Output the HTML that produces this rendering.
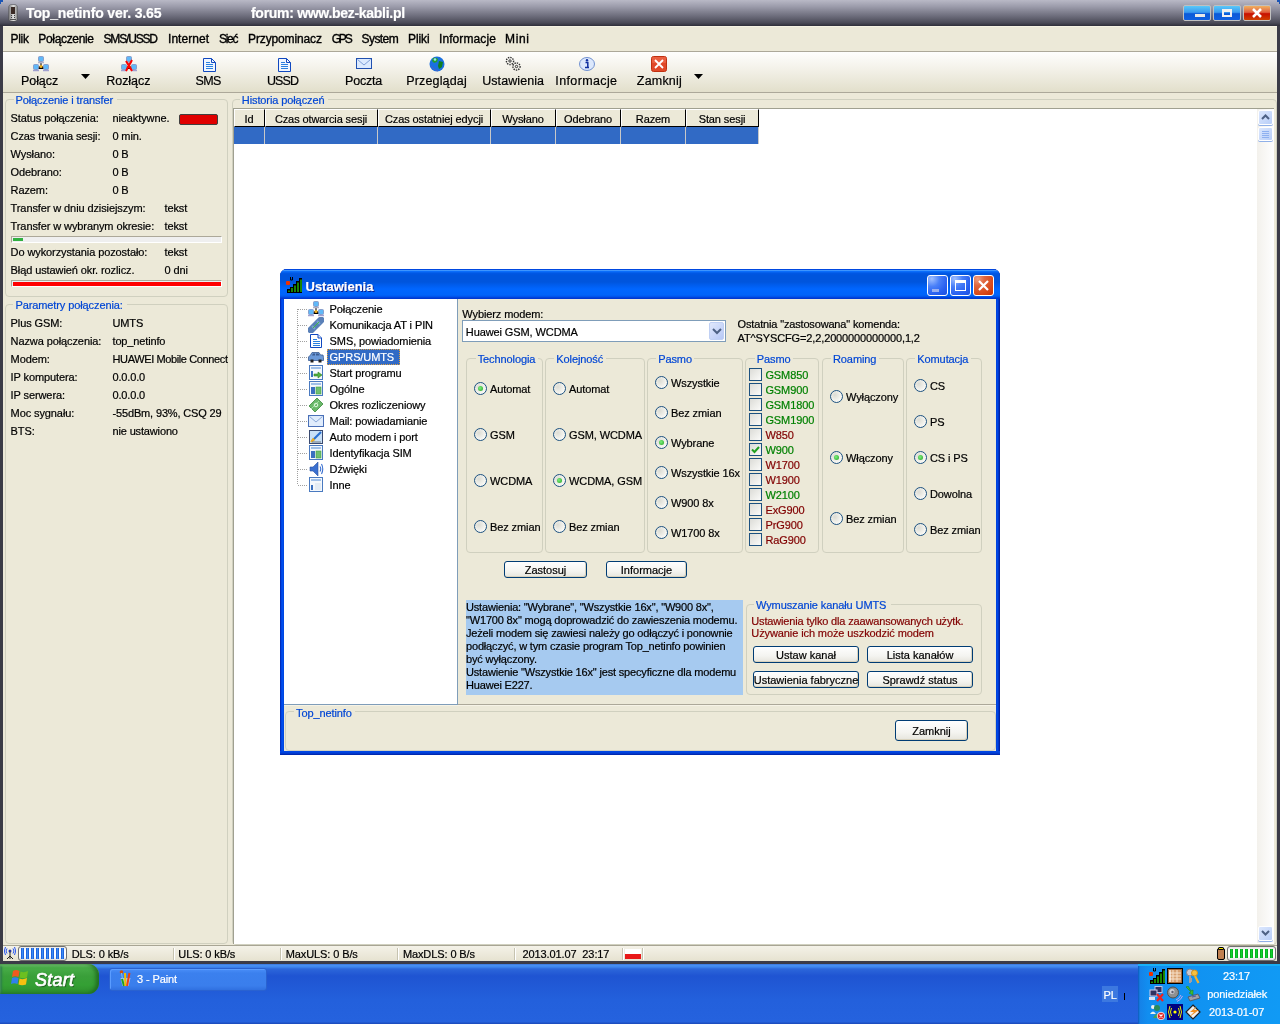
<!DOCTYPE html><html><head><meta charset="utf-8"><style>
html,body{margin:0;padding:0;width:1280px;height:1024px;overflow:hidden;background:#fff;}
body{position:relative;font-family:"Liberation Sans",sans-serif;font-size:11px;}
#root{position:absolute;left:0;top:0;width:1280px;height:1024px;will-change:transform;}
.t{-webkit-text-stroke:0.2px currentColor;}
.t{position:absolute;white-space:pre;}
div{box-sizing:border-box;}
</style></head><body><div id="root">
<div style="position:absolute;left:0px;top:0px;width:1280px;height:964px;background:#3b3b47;"></div>
<div style="position:absolute;left:0px;top:0px;width:1280px;height:26px;background:linear-gradient(#b9b9c6 0%,#9c9cab 25%,#6f6f7e 60%,#4a4a57 88%,#2e2e39 100%);"></div>
<div style="position:absolute;left:0px;top:0px;width:3px;height:2px;background:#1b55b5;"></div>
<div style="position:absolute;left:0px;top:0px;width:1px;height:4px;background:#1b55b5;"></div>
<div style="position:absolute;left:1277px;top:0px;width:3px;height:2px;background:#1b55b5;"></div>
<div style="position:absolute;left:1279px;top:0px;width:1px;height:4px;background:#1b55b5;"></div>
<div class="t " style="left:26px;top:4.65px;font-size:14px;line-height:17px;color:#fff;font-weight:bold;letter-spacing:-0.134px;">Top_netinfo ver. 3.65</div>
<div class="t " style="left:251px;top:4.65px;font-size:14px;line-height:17px;color:#fff;font-weight:bold;letter-spacing:-0.293px;">forum: www.bez-kabli.pl</div>
<div style="position:absolute;left:9px;top:5px;width:8px;height:16px;background:linear-gradient(90deg,#7a7a7a,#c8c8c8 40%,#e0e0e0 60%,#8a8a8a);border-radius:2px;box-shadow:0 0 0 0.5px #505050;"></div>
<div style="position:absolute;left:11px;top:7px;width:4px;height:7px;background:#3a2a25;"></div>
<div style="position:absolute;left:11px;top:15px;width:1px;height:1px;background:#404040;"></div>
<div style="position:absolute;left:14px;top:15px;width:1px;height:1px;background:#404040;"></div>
<div style="position:absolute;left:11px;top:17px;width:1px;height:1px;background:#404040;"></div>
<div style="position:absolute;left:14px;top:17px;width:1px;height:1px;background:#404040;"></div>
<div style="position:absolute;left:10px;top:19px;width:6px;height:1px;background:#505050;"></div>
<div style="position:absolute;left:1183px;top:5px;width:28px;height:16px;background:linear-gradient(#5ac8f8 0%,#3a9af0 45%,#0a5ad8 55%,#1060e0 100%);border:1px solid #c0c0c0;border-radius:2px;"></div>
<div style="position:absolute;left:1213px;top:5px;width:28px;height:16px;background:linear-gradient(#5ac8f8 0%,#3a9af0 45%,#0a5ad8 55%,#1060e0 100%);border:1px solid #c0c0c0;border-radius:2px;"></div>
<div style="position:absolute;left:1243px;top:5px;width:28px;height:16px;background:linear-gradient(#f0b060 0%,#e06040 45%,#c81000 55%,#d04000 100%);border:1px solid #c0c0c0;border-radius:2px;"></div>
<div style="position:absolute;left:1195px;top:14px;width:10px;height:3px;background:#e8e8e8;"></div>
<div style="position:absolute;left:1222px;top:9px;width:10px;height:8px;border:2px solid #f0f0f0;border-top-width:3px;"></div>
<svg style="position:absolute;left:1252px;top:8px" width="10" height="10"><path d="M1 1L9 9M9 1L1 9" stroke="#fff" stroke-width="2.5"/></svg>
<div style="position:absolute;left:3px;top:26px;width:1274px;height:935px;background:#ece9d8;"></div>
<div style="position:absolute;left:3px;top:26px;width:1274px;height:1px;background:#f6f3e3;"></div>
<div style="position:absolute;left:3px;top:51px;width:1274px;height:1px;background:#aca899;"></div>
<div class="t " style="left:10.5px;top:31.84px;font-size:12px;line-height:14px;color:#000;font-weight:normal;letter-spacing:-0.281px;-webkit-text-stroke:0.35px #000;">Plik</div>
<div class="t " style="left:38.3px;top:31.84px;font-size:12px;line-height:14px;color:#000;font-weight:normal;letter-spacing:-0.334px;-webkit-text-stroke:0.35px #000;">Połączenie</div>
<div class="t " style="left:103.5px;top:31.84px;font-size:12px;line-height:14px;color:#000;font-weight:normal;letter-spacing:-1.167px;-webkit-text-stroke:0.35px #000;">SMS/USSD</div>
<div class="t " style="left:168px;top:31.84px;font-size:12px;line-height:14px;color:#000;font-weight:normal;letter-spacing:0.047px;-webkit-text-stroke:0.35px #000;">Internet</div>
<div class="t " style="left:219px;top:31.84px;font-size:12px;line-height:14px;color:#000;font-weight:normal;letter-spacing:-1.281px;-webkit-text-stroke:0.35px #000;">Sieć</div>
<div class="t " style="left:248px;top:31.84px;font-size:12px;line-height:14px;color:#000;font-weight:normal;letter-spacing:-0.124px;-webkit-text-stroke:0.35px #000;">Przypominacz</div>
<div class="t " style="left:331.7px;top:31.84px;font-size:12px;line-height:14px;color:#000;font-weight:normal;letter-spacing:-2.164px;-webkit-text-stroke:0.35px #000;">GPS</div>
<div class="t " style="left:361.5px;top:31.84px;font-size:12px;line-height:14px;color:#000;font-weight:normal;letter-spacing:-0.560px;-webkit-text-stroke:0.35px #000;">System</div>
<div class="t " style="left:408px;top:31.84px;font-size:12px;line-height:14px;color:#000;font-weight:normal;letter-spacing:-0.079px;-webkit-text-stroke:0.35px #000;">Pliki</div>
<div class="t " style="left:439px;top:31.84px;font-size:12px;line-height:14px;color:#000;font-weight:normal;letter-spacing:0.087px;-webkit-text-stroke:0.35px #000;">Informacje</div>
<div class="t " style="left:505px;top:31.84px;font-size:12px;line-height:14px;color:#000;font-weight:normal;letter-spacing:0.661px;-webkit-text-stroke:0.35px #000;">Mini</div>
<div style="position:absolute;left:3px;top:52px;width:1274px;height:40px;background:linear-gradient(#fefefd 0%,#f4f2ea 40%,#e2dfcb 100%);"></div>
<div style="position:absolute;left:3px;top:92px;width:1274px;height:1px;background:#aca899;"></div>
<div class="t " style="left:21px;top:74.17px;font-size:12.5px;line-height:15px;color:#000;font-weight:normal;letter-spacing:-0.066px;">Połącz</div>
<div class="t " style="left:106.3px;top:74.17px;font-size:12.5px;line-height:15px;color:#000;font-weight:normal;letter-spacing:-0.061px;">Rozłącz</div>
<div class="t " style="left:195.4px;top:74.17px;font-size:12.5px;line-height:15px;color:#000;font-weight:normal;letter-spacing:-0.597px;">SMS</div>
<div class="t " style="left:267px;top:74.17px;font-size:12.5px;line-height:15px;color:#000;font-weight:normal;letter-spacing:-0.917px;">USSD</div>
<div class="t " style="left:345px;top:74.17px;font-size:12.5px;line-height:15px;color:#000;font-weight:normal;letter-spacing:-0.184px;">Poczta</div>
<div class="t " style="left:406.2px;top:74.17px;font-size:12.5px;line-height:15px;color:#000;font-weight:normal;letter-spacing:0.158px;">Przeglądaj</div>
<div class="t " style="left:482.2px;top:74.17px;font-size:12.5px;line-height:15px;color:#000;font-weight:normal;letter-spacing:0.072px;">Ustawienia</div>
<div class="t " style="left:555.3px;top:74.17px;font-size:12.5px;line-height:15px;color:#000;font-weight:normal;letter-spacing:0.373px;">Informacje</div>
<div class="t " style="left:636.8px;top:74.17px;font-size:12.5px;line-height:15px;color:#000;font-weight:normal;letter-spacing:0.206px;">Zamknij</div>
<svg style="position:absolute;left:81px;top:74px" width="9" height="5"><path d="M0 0H9L4.5 5Z" fill="#000"/></svg>
<svg style="position:absolute;left:694px;top:74px" width="9" height="5"><path d="M0 0H9L4.5 5Z" fill="#000"/></svg>
<svg style="position:absolute;left:33px;top:56px" width="16" height="16" viewBox="0 0 16 16"><path d="M8 5V10M3 13L8 10L13 13" stroke="#202020" stroke-width="1.2"/><rect x="5.5" y="0.5" width="5" height="5" rx="1" fill="#60b8f8" stroke="#8090c0" stroke-width=".8"/><path d="M5 6.5H11" stroke="#b0b0c8" stroke-width="1.5"/><rect x="0.5" y="8.5" width="5" height="5" rx="1" fill="#60b8f8" stroke="#8090c0" stroke-width=".8"/><path d="M0 14.5H6" stroke="#a0a0d0" stroke-width="1.5"/><rect x="10.5" y="8.5" width="5" height="5" rx="1" fill="#60b8f8" stroke="#8090c0" stroke-width=".8"/><path d="M10 14.5H16" stroke="#a0a0d0" stroke-width="1.5"/><circle cx="8" cy="10.5" r="1.5" fill="#f0b020"/></svg>
<svg style="position:absolute;left:121px;top:56px" width="16" height="16" viewBox="0 0 16 16"><path d="M8 5V10M3 13L8 10L13 13" stroke="#202020" stroke-width="1.2"/><rect x="5.5" y="0.5" width="5" height="5" rx="1" fill="#60b8f8" stroke="#8090c0" stroke-width=".8"/><path d="M5 6.5H11" stroke="#b0b0c8" stroke-width="1.5"/><rect x="0.5" y="8.5" width="5" height="5" rx="1" fill="#60b8f8" stroke="#8090c0" stroke-width=".8"/><path d="M0 14.5H6" stroke="#a0a0d0" stroke-width="1.5"/><rect x="10.5" y="8.5" width="5" height="5" rx="1" fill="#60b8f8" stroke="#8090c0" stroke-width=".8"/><path d="M10 14.5H16" stroke="#a0a0d0" stroke-width="1.5"/><circle cx="8" cy="10.5" r="1.5" fill="#f0b020"/><path d="M5 5L11 15M11 4L5 15" stroke="#ff0000" stroke-width="2"/></svg>
<svg style="position:absolute;left:203px;top:58px" width="13" height="14" viewBox="0 0 13 14"><path d="M0.5 0.5H8.5L12.5 4.5V13.5H0.5Z" fill="#f0f6ff" stroke="#1048c0" stroke-width="1"/><path d="M8.5 0.5V4.5H12.5" fill="none" stroke="#1048c0"/><path d="M3 4.5H7M3 6.5H10M3 8.5H10M3 10.5H10" stroke="#2a80e0" stroke-width="1"/></svg>
<svg style="position:absolute;left:278px;top:58px" width="13" height="14" viewBox="0 0 13 14"><path d="M0.5 0.5H8.5L12.5 4.5V13.5H0.5Z" fill="#f0f6ff" stroke="#1048c0" stroke-width="1"/><path d="M8.5 0.5V4.5H12.5" fill="none" stroke="#1048c0"/><path d="M3 4.5H7M3 6.5H10M3 8.5H10M3 10.5H10" stroke="#2a80e0" stroke-width="1"/></svg>
<svg style="position:absolute;left:356px;top:58px" width="16" height="11" viewBox="0 0 16 11"><rect x="0.5" y="0.5" width="15" height="10" fill="#dceafe" stroke="#2050b0"/><path d="M1.5 1.5L8 7L14.5 1.5" stroke="#80a0d8" fill="none"/></svg>
<svg style="position:absolute;left:429px;top:56px" width="16" height="16" viewBox="0 0 16 16"><circle cx="8" cy="8" r="7.5" fill="#1a70e0"/><path d="M4 2Q7 1 9 3L8 6L5 7L3 5Z" fill="#20a030"/><path d="M10 5L14 6L13 11L10 13L9 10Z" fill="#108020"/><circle cx="6" cy="3.5" r="1.3" fill="#a0e0f0"/><path d="M2 10Q5 14 9 15" stroke="#5060c0" fill="none"/></svg>
<svg style="position:absolute;left:505px;top:56px" width="17" height="16" viewBox="0 0 17 16"><circle cx="5" cy="5" r="3.6" fill="none" stroke="#303030" stroke-width="1.4" stroke-dasharray="1.4 1"/><circle cx="5" cy="5" r="1.2" fill="none" stroke="#303030"/><circle cx="11.5" cy="10.5" r="3.6" fill="none" stroke="#303030" stroke-width="1.4" stroke-dasharray="1.4 1"/><circle cx="11.5" cy="10.5" r="1.2" fill="none" stroke="#303030"/></svg>
<svg style="position:absolute;left:579px;top:57px" width="16" height="14" viewBox="0 0 16 14"><ellipse cx="8" cy="7" rx="7.5" ry="6.5" fill="#dce8fc" stroke="#7090d0"/><circle cx="8" cy="3.3" r="1.2" fill="#1030a0"/><path d="M6.5 5.5H8.8V10.5H10M6 10.5H8.8" stroke="#1030a0" stroke-width="1.5" fill="none"/></svg>
<svg style="position:absolute;left:651px;top:56px" width="16" height="16" viewBox="0 0 16 16"><rect x="0.5" y="0.5" width="15" height="15" rx="2" fill="#e04828" stroke="#c03010"/><rect x="1" y="1" width="14" height="6" rx="1" fill="#f07050" opacity=".6"/><path d="M4 4L12 12M12 4L4 12" stroke="#fff" stroke-width="1.8"/></svg>
<div style="position:absolute;left:5px;top:99px;width:223px;height:198px;border:1px solid #d0d0bf;border-radius:4px;"></div>
<div class="t" style="left:13.5px;top:93px;height:13px;padding:0 2px;background:#ece9d8;font-size:11px;line-height:13px;color:transparent">Połączenie i transfer</div>
<div class="t " style="left:15.5px;top:93.69px;font-size:11px;line-height:13px;color:#0046d5;font-weight:normal;letter-spacing:-0.100px;">Połączenie i transfer</div>
<div class="t " style="left:10.6px;top:111.69px;font-size:11px;line-height:13px;color:#000;font-weight:normal;letter-spacing:-0.100px;">Status połączenia:</div>
<div class="t " style="left:112.4px;top:111.69px;font-size:11px;line-height:13px;color:#000;font-weight:normal;letter-spacing:-0.100px;">nieaktywne.</div>
<div class="t " style="left:10.6px;top:129.69px;font-size:11px;line-height:13px;color:#000;font-weight:normal;letter-spacing:-0.100px;">Czas trwania sesji:</div>
<div class="t " style="left:112.4px;top:129.69px;font-size:11px;line-height:13px;color:#000;font-weight:normal;letter-spacing:-0.100px;">0 min.</div>
<div class="t " style="left:10.6px;top:147.69px;font-size:11px;line-height:13px;color:#000;font-weight:normal;letter-spacing:-0.100px;">Wysłano:</div>
<div class="t " style="left:112.4px;top:147.69px;font-size:11px;line-height:13px;color:#000;font-weight:normal;letter-spacing:-0.100px;">0 B</div>
<div class="t " style="left:10.6px;top:165.69px;font-size:11px;line-height:13px;color:#000;font-weight:normal;letter-spacing:-0.100px;">Odebrano:</div>
<div class="t " style="left:112.4px;top:165.69px;font-size:11px;line-height:13px;color:#000;font-weight:normal;letter-spacing:-0.100px;">0 B</div>
<div class="t " style="left:10.6px;top:183.69px;font-size:11px;line-height:13px;color:#000;font-weight:normal;letter-spacing:-0.100px;">Razem:</div>
<div class="t " style="left:112.4px;top:183.69px;font-size:11px;line-height:13px;color:#000;font-weight:normal;letter-spacing:-0.100px;">0 B</div>
<div class="t " style="left:10.6px;top:201.69px;font-size:11px;line-height:13px;color:#000;font-weight:normal;letter-spacing:-0.100px;">Transfer w dniu dzisiejszym:</div>
<div class="t " style="left:164.5px;top:201.69px;font-size:11px;line-height:13px;color:#000;font-weight:normal;letter-spacing:-0.100px;">tekst</div>
<div class="t " style="left:10.6px;top:219.69px;font-size:11px;line-height:13px;color:#000;font-weight:normal;letter-spacing:-0.100px;">Transfer w wybranym okresie:</div>
<div class="t " style="left:164.5px;top:219.69px;font-size:11px;line-height:13px;color:#000;font-weight:normal;letter-spacing:-0.100px;">tekst</div>
<div class="t " style="left:10.6px;top:245.69px;font-size:11px;line-height:13px;color:#000;font-weight:normal;letter-spacing:-0.100px;">Do wykorzystania pozostało:</div>
<div class="t " style="left:164.5px;top:245.69px;font-size:11px;line-height:13px;color:#000;font-weight:normal;letter-spacing:-0.100px;">tekst</div>
<div class="t " style="left:10.6px;top:263.69px;font-size:11px;line-height:13px;color:#000;font-weight:normal;letter-spacing:-0.100px;">Błąd ustawień okr. rozlicz.</div>
<div class="t " style="left:164.5px;top:263.69px;font-size:11px;line-height:13px;color:#000;font-weight:normal;letter-spacing:-0.100px;">0 dni</div>
<div style="position:absolute;left:179px;top:114px;width:39px;height:11px;background:#e00000;border:1px solid #404040;border-radius:2px;"></div>
<div style="position:absolute;left:11px;top:236px;width:211px;height:7px;background:#efefef;border-top:1px solid #aca899;border-left:1px solid #aca899;border-bottom:1px solid #fff;border-right:1px solid #fff;"></div>
<div style="position:absolute;left:13px;top:238px;width:10px;height:3px;background:#30b040;"></div>
<div style="position:absolute;left:11px;top:280px;width:211px;height:7px;background:#ff0000;border-top:1px solid #aca899;border-left:1px solid #aca899;border-bottom:1px solid #fff;border-right:1px solid #fff;box-shadow:inset 1px 1px 0 #e8f0f0;"></div>
<div style="position:absolute;left:5px;top:304px;width:223px;height:640px;border:1px solid #d0d0bf;border-radius:4px;"></div>
<div class="t" style="left:13.4px;top:298px;height:13px;padding:0 2px;background:#ece9d8;font-size:11px;line-height:13px;color:transparent">Parametry połączenia:</div>
<div class="t " style="left:15.4px;top:298.69px;font-size:11px;line-height:13px;color:#0046d5;font-weight:normal;letter-spacing:-0.100px;">Parametry połączenia:</div>
<div class="t " style="left:10.6px;top:316.69px;font-size:11px;line-height:13px;color:#000;font-weight:normal;letter-spacing:-0.100px;">Plus GSM:</div>
<div style="position:absolute;left:112px;top:314px;width:116px;height:16px;overflow:hidden">
<div class="t " style="left:0.5px;top:2.69px;font-size:11px;line-height:13px;color:#000;font-weight:normal;letter-spacing:-0.150px;">UMTS</div>
</div>
<div class="t " style="left:10.6px;top:334.69px;font-size:11px;line-height:13px;color:#000;font-weight:normal;letter-spacing:-0.100px;">Nazwa połączenia:</div>
<div style="position:absolute;left:112px;top:332px;width:116px;height:16px;overflow:hidden">
<div class="t " style="left:0.5px;top:2.69px;font-size:11px;line-height:13px;color:#000;font-weight:normal;letter-spacing:-0.150px;">top_netinfo</div>
</div>
<div class="t " style="left:10.6px;top:352.69px;font-size:11px;line-height:13px;color:#000;font-weight:normal;letter-spacing:-0.100px;">Modem:</div>
<div style="position:absolute;left:112px;top:350px;width:116px;height:16px;overflow:hidden">
<div class="t " style="left:0.5px;top:2.69px;font-size:11px;line-height:13px;color:#000;font-weight:normal;letter-spacing:-0.380px;">HUAWEI Mobile Connect</div>
</div>
<div class="t " style="left:10.6px;top:370.69px;font-size:11px;line-height:13px;color:#000;font-weight:normal;letter-spacing:-0.100px;">IP komputera:</div>
<div style="position:absolute;left:112px;top:368px;width:116px;height:16px;overflow:hidden">
<div class="t " style="left:0.5px;top:2.69px;font-size:11px;line-height:13px;color:#000;font-weight:normal;letter-spacing:-0.150px;">0.0.0.0</div>
</div>
<div class="t " style="left:10.6px;top:388.69px;font-size:11px;line-height:13px;color:#000;font-weight:normal;letter-spacing:-0.100px;">IP serwera:</div>
<div style="position:absolute;left:112px;top:386px;width:116px;height:16px;overflow:hidden">
<div class="t " style="left:0.5px;top:2.69px;font-size:11px;line-height:13px;color:#000;font-weight:normal;letter-spacing:-0.150px;">0.0.0.0</div>
</div>
<div class="t " style="left:10.6px;top:406.69px;font-size:11px;line-height:13px;color:#000;font-weight:normal;letter-spacing:-0.100px;">Moc sygnału:</div>
<div style="position:absolute;left:112px;top:404px;width:116px;height:16px;overflow:hidden">
<div class="t " style="left:0.5px;top:2.69px;font-size:11px;line-height:13px;color:#000;font-weight:normal;letter-spacing:-0.150px;">-55dBm, 93%, CSQ 29</div>
</div>
<div class="t " style="left:10.6px;top:424.69px;font-size:11px;line-height:13px;color:#000;font-weight:normal;letter-spacing:-0.100px;">BTS:</div>
<div style="position:absolute;left:112px;top:422px;width:116px;height:16px;overflow:hidden">
<div class="t " style="left:0.5px;top:2.69px;font-size:11px;line-height:13px;color:#000;font-weight:normal;letter-spacing:-0.150px;">nie ustawiono</div>
</div>
<div style="position:absolute;left:232px;top:99px;width:1045px;height:846px;border:1px solid #d0d0bf;border-radius:4px;"></div>
<div class="t" style="left:239.8px;top:93px;height:13px;padding:0 2px;background:#ece9d8;font-size:11px;line-height:13px;color:transparent">Historia połączeń</div>
<div class="t " style="left:241.8px;top:93.69px;font-size:11px;line-height:13px;color:#0046d5;font-weight:normal;letter-spacing:-0.100px;">Historia połączeń</div>
<div style="position:absolute;left:233px;top:108px;width:1041px;height:836px;background:#fff;border-left:1px solid #a0a090;border-top:1px solid #a0a090;"></div>
<div style="position:absolute;left:234px;top:109px;width:31px;height:18px;background:#ece9d8;border-top:1px solid #fff;border-left:1px solid #fff;border-right:1px solid #000;border-bottom:1px solid #000;"></div>
<div class="t " style="left:234px;top:112.69px;font-size:11px;line-height:13px;color:#000;font-weight:normal;letter-spacing:-0.100px;width:30px;text-align:center;">Id</div>
<div style="position:absolute;left:234px;top:127px;width:31px;height:17px;background:#316ac5;border-right:1px solid #c8c8c8;"></div>
<div style="position:absolute;left:265px;top:109px;width:113px;height:18px;background:#ece9d8;border-top:1px solid #fff;border-left:1px solid #fff;border-right:1px solid #000;border-bottom:1px solid #000;"></div>
<div class="t " style="left:265px;top:112.69px;font-size:11px;line-height:13px;color:#000;font-weight:normal;letter-spacing:-0.100px;width:112px;text-align:center;">Czas otwarcia sesji</div>
<div style="position:absolute;left:265px;top:127px;width:113px;height:17px;background:#316ac5;border-right:1px solid #c8c8c8;"></div>
<div style="position:absolute;left:378px;top:109px;width:113px;height:18px;background:#ece9d8;border-top:1px solid #fff;border-left:1px solid #fff;border-right:1px solid #000;border-bottom:1px solid #000;"></div>
<div class="t " style="left:378px;top:112.69px;font-size:11px;line-height:13px;color:#000;font-weight:normal;letter-spacing:-0.100px;width:112px;text-align:center;">Czas ostatniej edycji</div>
<div style="position:absolute;left:378px;top:127px;width:113px;height:17px;background:#316ac5;border-right:1px solid #c8c8c8;"></div>
<div style="position:absolute;left:491px;top:109px;width:65px;height:18px;background:#ece9d8;border-top:1px solid #fff;border-left:1px solid #fff;border-right:1px solid #000;border-bottom:1px solid #000;"></div>
<div class="t " style="left:491px;top:112.69px;font-size:11px;line-height:13px;color:#000;font-weight:normal;letter-spacing:-0.100px;width:64px;text-align:center;">Wysłano</div>
<div style="position:absolute;left:491px;top:127px;width:65px;height:17px;background:#316ac5;border-right:1px solid #c8c8c8;"></div>
<div style="position:absolute;left:556px;top:109px;width:65px;height:18px;background:#ece9d8;border-top:1px solid #fff;border-left:1px solid #fff;border-right:1px solid #000;border-bottom:1px solid #000;"></div>
<div class="t " style="left:556px;top:112.69px;font-size:11px;line-height:13px;color:#000;font-weight:normal;letter-spacing:-0.100px;width:64px;text-align:center;">Odebrano</div>
<div style="position:absolute;left:556px;top:127px;width:65px;height:17px;background:#316ac5;border-right:1px solid #c8c8c8;"></div>
<div style="position:absolute;left:621px;top:109px;width:65px;height:18px;background:#ece9d8;border-top:1px solid #fff;border-left:1px solid #fff;border-right:1px solid #000;border-bottom:1px solid #000;"></div>
<div class="t " style="left:621px;top:112.69px;font-size:11px;line-height:13px;color:#000;font-weight:normal;letter-spacing:-0.100px;width:64px;text-align:center;">Razem</div>
<div style="position:absolute;left:621px;top:127px;width:65px;height:17px;background:#316ac5;border-right:1px solid #c8c8c8;"></div>
<div style="position:absolute;left:686px;top:109px;width:73px;height:18px;background:#ece9d8;border-top:1px solid #fff;border-left:1px solid #fff;border-right:1px solid #000;border-bottom:1px solid #000;"></div>
<div class="t " style="left:686px;top:112.69px;font-size:11px;line-height:13px;color:#000;font-weight:normal;letter-spacing:-0.100px;width:72px;text-align:center;">Stan sesji</div>
<div style="position:absolute;left:686px;top:127px;width:73px;height:17px;background:#316ac5;border-right:1px solid #c8c8c8;"></div>
<div style="position:absolute;left:1257px;top:109px;width:17px;height:834px;background:linear-gradient(90deg,#f3f1ec,#fefefe);"></div>
<div style="position:absolute;left:1258px;top:110px;width:15px;height:15px;background:linear-gradient(135deg,#dce7fd,#b8cef8);border:1px solid #fff;border-radius:2px;box-shadow:0 1px 0 #90b0e8;"></div>
<svg style="position:absolute;left:1261px;top:114px" width="9" height="6"><path d="M1 5L4.5 1.5L8 5" stroke="#4d6185" stroke-width="2" fill="none"/></svg>
<div style="position:absolute;left:1258px;top:926px;width:15px;height:15px;background:linear-gradient(135deg,#dce7fd,#b8cef8);border:1px solid #fff;border-radius:2px;box-shadow:0 1px 0 #90b0e8;"></div>
<svg style="position:absolute;left:1261px;top:930px" width="9" height="6"><path d="M1 1L4.5 4.5L8 1" stroke="#4d6185" stroke-width="2" fill="none"/></svg>
<div style="position:absolute;left:1258px;top:127px;width:15px;height:14px;background:linear-gradient(135deg,#dce7fd,#b8cef8);border:1px solid #fff;border-radius:2px;box-shadow:0 1px 0 #90b0e8;"></div>
<div style="position:absolute;left:1262px;top:131px;width:7px;height:1px;background:#8eb0f0;"></div>
<div style="position:absolute;left:1262px;top:133px;width:7px;height:1px;background:#8eb0f0;"></div>
<div style="position:absolute;left:1262px;top:135px;width:7px;height:1px;background:#8eb0f0;"></div>
<div style="position:absolute;left:1262px;top:137px;width:7px;height:1px;background:#8eb0f0;"></div>
<div style="position:absolute;left:3px;top:945px;width:1274px;height:1px;background:#a8a594;"></div>
<div style="position:absolute;left:3px;top:946px;width:1274px;height:15px;background:linear-gradient(#f4f2e8,#e6e2d0);"></div>
<div style="position:absolute;left:173px;top:948px;width:1px;height:12px;background:#c6c3b0;"></div>
<div style="position:absolute;left:174px;top:948px;width:1px;height:12px;background:#fff;"></div>
<div style="position:absolute;left:280px;top:948px;width:1px;height:12px;background:#c6c3b0;"></div>
<div style="position:absolute;left:281px;top:948px;width:1px;height:12px;background:#fff;"></div>
<div style="position:absolute;left:397px;top:948px;width:1px;height:12px;background:#c6c3b0;"></div>
<div style="position:absolute;left:398px;top:948px;width:1px;height:12px;background:#fff;"></div>
<div style="position:absolute;left:514px;top:948px;width:1px;height:12px;background:#c6c3b0;"></div>
<div style="position:absolute;left:515px;top:948px;width:1px;height:12px;background:#fff;"></div>
<div style="position:absolute;left:622px;top:948px;width:1px;height:12px;background:#c6c3b0;"></div>
<div style="position:absolute;left:623px;top:948px;width:1px;height:12px;background:#fff;"></div>
<div style="position:absolute;left:642px;top:948px;width:1px;height:12px;background:#c6c3b0;"></div>
<div style="position:absolute;left:643px;top:948px;width:1px;height:12px;background:#fff;"></div>
<div class="t " style="left:71.7px;top:948.19px;font-size:11px;line-height:13px;color:#000;font-weight:normal;letter-spacing:-0.100px;">DLS: 0 kB/s</div>
<div class="t " style="left:178.3px;top:948.19px;font-size:11px;line-height:13px;color:#000;font-weight:normal;letter-spacing:-0.100px;">ULS: 0 kB/s</div>
<div class="t " style="left:285.7px;top:948.19px;font-size:11px;line-height:13px;color:#000;font-weight:normal;letter-spacing:-0.100px;">MaxULS: 0 B/s</div>
<div class="t " style="left:402.9px;top:948.19px;font-size:11px;line-height:13px;color:#000;font-weight:normal;letter-spacing:-0.100px;">MaxDLS: 0 B/s</div>
<div class="t " style="left:522.4px;top:948.19px;font-size:11px;line-height:13px;color:#000;font-weight:normal;letter-spacing:-0.100px;">2013.01.07  23:17</div>
<div style="position:absolute;left:625px;top:949px;width:16px;height:5px;background:#fff;"></div>
<div style="position:absolute;left:625px;top:954px;width:16px;height:5px;background:#e81818;"></div>
<div style="position:absolute;left:18px;top:946px;width:49px;height:15px;background:linear-gradient(#e8e8e8,#fff 30%,#fff 70%,#e0e0e0);border:1px solid #707070;border-radius:3px;"></div>
<div style="position:absolute;left:21px;top:948px;width:3px;height:11px;background:linear-gradient(90deg,#1050d8,#3c8cf0,#1050d8);"></div>
<div style="position:absolute;left:26px;top:948px;width:3px;height:11px;background:linear-gradient(90deg,#1050d8,#3c8cf0,#1050d8);"></div>
<div style="position:absolute;left:31px;top:948px;width:3px;height:11px;background:linear-gradient(90deg,#1050d8,#3c8cf0,#1050d8);"></div>
<div style="position:absolute;left:36px;top:948px;width:3px;height:11px;background:linear-gradient(90deg,#1050d8,#3c8cf0,#1050d8);"></div>
<div style="position:absolute;left:41px;top:948px;width:3px;height:11px;background:linear-gradient(90deg,#1050d8,#3c8cf0,#1050d8);"></div>
<div style="position:absolute;left:46px;top:948px;width:3px;height:11px;background:linear-gradient(90deg,#1050d8,#3c8cf0,#1050d8);"></div>
<div style="position:absolute;left:51px;top:948px;width:3px;height:11px;background:linear-gradient(90deg,#1050d8,#3c8cf0,#1050d8);"></div>
<div style="position:absolute;left:56px;top:948px;width:3px;height:11px;background:linear-gradient(90deg,#1050d8,#3c8cf0,#1050d8);"></div>
<div style="position:absolute;left:61px;top:948px;width:3px;height:11px;background:linear-gradient(90deg,#1050d8,#3c8cf0,#1050d8);"></div>
<svg style="position:absolute;left:4px;top:947px" width="12" height="13"><path d="M3 1.5Q1 4 3 6.5M9 1.5Q11 4 9 6.5M1.5 0Q-1 4 1.5 8M10.5 0Q13 4 10.5 8" stroke="#2050f0" fill="none"/><circle cx="6" cy="4" r="1.5" fill="#2030a0"/><path d="M6 5V12M6 9L3 12M6 9L9 12" stroke="#202020"/></svg>
<div style="position:absolute;left:1227px;top:946px;width:49px;height:15px;background:linear-gradient(#e8e8e8,#fff 30%,#fff 70%,#e0e0e0);border:1px solid #707070;border-radius:3px;"></div>
<div style="position:absolute;left:1230px;top:949px;width:3px;height:9px;background:linear-gradient(90deg,#08a018,#10d030,#08a018);"></div>
<div style="position:absolute;left:1235px;top:949px;width:3px;height:9px;background:linear-gradient(90deg,#08a018,#10d030,#08a018);"></div>
<div style="position:absolute;left:1240px;top:949px;width:3px;height:9px;background:linear-gradient(90deg,#08a018,#10d030,#08a018);"></div>
<div style="position:absolute;left:1245px;top:949px;width:3px;height:9px;background:linear-gradient(90deg,#08a018,#10d030,#08a018);"></div>
<div style="position:absolute;left:1250px;top:949px;width:3px;height:9px;background:linear-gradient(90deg,#08a018,#10d030,#08a018);"></div>
<div style="position:absolute;left:1255px;top:949px;width:3px;height:9px;background:linear-gradient(90deg,#08a018,#10d030,#08a018);"></div>
<div style="position:absolute;left:1260px;top:949px;width:3px;height:9px;background:linear-gradient(90deg,#08a018,#10d030,#08a018);"></div>
<div style="position:absolute;left:1265px;top:949px;width:3px;height:9px;background:linear-gradient(90deg,#08a018,#10d030,#08a018);"></div>
<div style="position:absolute;left:1270px;top:949px;width:3px;height:9px;background:linear-gradient(90deg,#08a018,#10d030,#08a018);"></div>
<div style="position:absolute;left:1217px;top:948px;width:8px;height:12px;background:#c08050;border:1px solid #000;border-radius:2px;"></div>
<div style="position:absolute;left:1218px;top:947px;width:6px;height:3px;background:#000;border-radius:2px;"></div>
<div style="position:absolute;left:1219px;top:948px;width:4px;height:1px;background:#f0e000;"></div>
<div style="position:absolute;left:0px;top:964px;width:1280px;height:60px;background:linear-gradient(#3168d5 0px,#4a92f2 1px,#3f86ee 3px,#2c66da 5px,#1f54d2 12px,#2360dc 60%,#2562de 96%,#1a48b8 100%);"></div>
<div style="position:absolute;left:0;top:964px;width:99px;height:30px;background:linear-gradient(#62c062 0%,#48ad48 12%,#3a9f3a 40%,#34a034 70%,#2d8c2d 100%);border-radius:0 11px 11px 0;box-shadow:inset -3px 0 4px #1f6a1f, inset 0 2px 2px #7acc7a, inset 2px 0 2px #2a7a4a;"></div>
<div class="t " style="left:35px;top:968.76px;font-size:18px;line-height:22px;color:#fff;font-weight:normal;letter-spacing:0.246px;font-style:italic;-webkit-text-stroke:0.7px #fff;text-shadow:1px 1px 1px #1a4a1a;">Start</div>
<svg style="position:absolute;left:10px;top:969px" width="20" height="19"><path d="M3 2Q6 0 9.5 2L8.5 8Q5 6.5 2 8Z" fill="#f05a20"/><path d="M10.5 2.5Q14 4 18 2L17 8.5Q13 10 9.5 8.5Z" fill="#6cc020"/><path d="M2 9Q5 7.5 8.5 9L7.5 15Q4 13.5 1 15Z" fill="#3080f0"/><path d="M9.5 9.5Q13 11 17 9L16 15.5Q12 17 8.5 15.5Z" fill="#f8c010"/></svg>
<div style="position:absolute;left:109px;top:968px;width:158px;height:23px;background:linear-gradient(#4a8ef8,#3b80ee 20%,#3a7eec 80%,#3070e0);border:1px solid #2a62d0;border-radius:3px;box-shadow:inset 1px 1px 0 #5a9cff;"></div>
<div class="t " style="left:137px;top:973.19px;font-size:11px;line-height:13px;color:#fff;font-weight:normal;letter-spacing:-0.100px;">3 - Paint</div>
<svg style="position:absolute;left:119px;top:970px" width="13" height="17"><path d="M1.5 8L3.5 16H9.5L11.5 8Z" fill="#d8e0f0" opacity=".7"/><path d="M3 9L5 16" stroke="#20a020" stroke-width="2"/><path d="M6 3L6.5 16" stroke="#f0c000" stroke-width="2"/><path d="M10.5 3L8 16" stroke="#f04010" stroke-width="2"/><circle cx="2.5" cy="2" r="1.8" fill="#d05010"/><path d="M2.5 3L3.5 9" stroke="#80c0f0" stroke-width="1"/></svg>
<div style="position:absolute;left:1138px;top:964px;width:142px;height:60px;background:linear-gradient(90deg,#0c59b9 0px,#1582e8 2px,#118ef0 10px,#109af5 100%);"></div>
<div style="position:absolute;left:1138px;top:964px;width:142px;height:2px;background:#18b0f8;"></div>
<div class="t " style="left:1223px;top:969.69px;font-size:11px;line-height:13px;color:#fff;font-weight:normal;letter-spacing:-0.100px;">23:17</div>
<div class="t " style="left:1207.3px;top:988.29px;font-size:11px;line-height:13px;color:#fff;font-weight:normal;letter-spacing:-0.100px;">poniedziałek</div>
<div class="t " style="left:1209px;top:1006.29px;font-size:11px;line-height:13px;color:#fff;font-weight:normal;letter-spacing:-0.100px;">2013-01-07</div>
<div style="position:absolute;left:1102px;top:986px;width:16px;height:16px;background:#3c78e0;"></div>
<div class="t " style="left:1103.5px;top:988.69px;font-size:11px;line-height:13px;color:#fff;font-weight:normal;letter-spacing:-0.100px;">PL</div>
<div style="position:absolute;left:1124px;top:993px;width:1px;height:7px;background:#000;"></div>
<svg style="position:absolute;left:1149px;top:968px" width="16" height="16" viewBox="0 0 16 16"><path d="M1 16V12H4V10H7V7H10V4H13V1H16V16Z" fill="#000"/><path d="M3 15V13.5M6 15V11M9 15V8.5M12 15V5.5M15 15V2.5" stroke="#30f000" stroke-width="1.1"/><rect x="0" y="4" width="4" height="4" rx="1" fill="#f03000"/><path d="M4.5 0V3H6.5V0" stroke="#000" fill="none" stroke-width="1"/></svg>
<svg style="position:absolute;left:1167px;top:968px" width="16" height="16" viewBox="0 0 16 16"><rect x="0.5" y="0.5" width="15" height="15" fill="#a86a38" stroke="#000"/><rect x="2" y="2" width="12" height="12" fill="#d8a070"/><path d="M2 5H14M2 8H14M2 11H14M6 2V14M10 2V14" stroke="#fff2e0" stroke-width="1" opacity=".8"/><rect x="2" y="2" width="2" height="12" fill="#fff" opacity=".6"/></svg>
<svg style="position:absolute;left:1185px;top:968px" width="16" height="16" viewBox="0 0 16 16"><circle cx="5" cy="4.5" r="3.5" fill="#c8c8d0" stroke="#808090"/><path d="M5 8V15M5 11H7M5 13H7" stroke="#a0a0a8" stroke-width="2"/><circle cx="9.5" cy="5" r="3" fill="#f8c040" stroke="#d09020"/><path d="M10 8L13.5 15" stroke="#f0b030" stroke-width="2.2"/></svg>
<svg style="position:absolute;left:1149px;top:986px" width="16" height="16" viewBox="0 0 16 16"><rect x="6" y="0.5" width="7" height="6" fill="#303060" stroke="#c0c0e0"/><rect x="1" y="4" width="7" height="6" fill="#303060" stroke="#d0d0f0"/><rect x="0" y="11" width="6" height="3" fill="#e0e0f0"/><path d="M8 8L14 15M14 8L8 15" stroke="#f02020" stroke-width="2.2"/></svg>
<svg style="position:absolute;left:1167px;top:986px" width="16" height="16" viewBox="0 0 16 16"><circle cx="6" cy="6.5" r="5.5" fill="#909090" stroke="#505050"/><circle cx="5" cy="5.5" r="2.5" fill="#d0d0d8"/><circle cx="5.5" cy="6" r="1.2" fill="#606070"/><path d="M9 14Q12 13 14 9M10 15.5Q14 14 15.5 10" stroke="#c0a8f0" fill="none"/></svg>
<svg style="position:absolute;left:1185px;top:986px" width="16" height="16" viewBox="0 0 16 16"><path d="M3 11L13 8L15 12L5 15Z" fill="#a0a0a8" stroke="#505058" stroke-width=".8"/><path d="M7 11L11 10" stroke="#5050a0"/><path d="M1 1L6 6L4 7L8 9V4L6 5L3 0Z" fill="#40c030" stroke="#208020" stroke-width=".6"/></svg>
<svg style="position:absolute;left:1149px;top:1004px" width="16" height="16" viewBox="0 0 16 16"><circle cx="4" cy="3" r="2" fill="#f0f0f0"/><path d="M1 10Q4 5 7 10Z" fill="#e8f0f0"/><circle cx="8" cy="4" r="3" fill="#2a8a5a"/><path d="M4 14Q8 6 12 14Z" fill="#40a060"/><circle cx="12" cy="12" r="3.8" fill="#e02020" stroke="#fff" stroke-width=".8"/><path d="M10.5 10.5L13.5 13.5M13.5 10.5L10.5 13.5" stroke="#fff" stroke-width="1.2"/></svg>
<svg style="position:absolute;left:1167px;top:1004px" width="16" height="16" viewBox="0 0 16 16"><rect width="16" height="16" fill="#000080"/><circle cx="8" cy="8" r="1.6" fill="#ffff00"/><path d="M4.5 4Q2.5 8 4.5 12M11.5 4Q13.5 8 11.5 12M3 2Q0 8 3 14M13 2Q16 8 13 14" stroke="#f0f000" fill="none" stroke-width="1"/></svg>
<svg style="position:absolute;left:1185px;top:1004px" width="16" height="16" viewBox="0 0 16 16"><path d="M8 1L15 8L8 15L1 8Z" fill="#f0f0f0" stroke="#202020" stroke-width="1.2"/><path d="M12 2L5 8H9L3 14L14 6H9Z" fill="#f09020"/></svg>
<div style="position:absolute;left:280px;top:269px;width:720px;height:486px;background:#0040d8;border-radius:7px 7px 0 0;box-shadow:inset 1px 0 0 #0030b0, inset -1px 0 0 #001890, inset 0 -1px 0 #001890;"></div>
<div style="position:absolute;left:280px;top:269px;width:720px;height:30px;border-radius:7px 7px 0 0;background:linear-gradient(#0047e0 0px,#0047e0 1px,#3d95ff 1px,#3d95ff 2px,#0a70ff 2px,#0a6af5 3px,#0058e6 4px,#0055dd 6px,#0055dd 13px,#005ae8 15px,#0066ff 20px,#0064fa 26px,#0050e8 28px,#0038d0 29px,#0038d0 30px);"></div>
<div style="position:absolute;left:280px;top:299px;width:4px;height:452px;background:linear-gradient(90deg,#0020a8,#0048e8 40%,#0050f0 70%,#0040d8);"></div>
<div style="position:absolute;left:996px;top:299px;width:4px;height:452px;background:linear-gradient(90deg,#0040d8,#0048e8 40%,#0030c0 70%,#001890);"></div>
<div style="position:absolute;left:280px;top:751px;width:720px;height:4px;background:linear-gradient(#0048e8,#0040d8 50%,#0020a0 100%);"></div>
<div style="position:absolute;left:284px;top:299px;width:712px;height:452px;background:#ece9d8;"></div>
<svg style="position:absolute;left:286px;top:277px" width="16" height="16"><path d="M1 16V12H4V10H7V7H10V4H13V1H16V16Z" fill="#000"/><path d="M3 15V13.5M6 15V11M9 15V8.5M12 15V5.5M15 15V2.5" stroke="#30f000" stroke-width="1.1"/><rect x="0" y="4" width="4" height="4" rx="1" fill="#f03000"/><path d="M4.5 0V3H6.5V0" stroke="#000" fill="none" stroke-width="1"/></svg>
<div class="t " style="left:305.5px;top:278.50px;font-size:13px;line-height:16px;color:#fff;font-weight:bold;text-shadow:1px 1px 0 #0a1e8a;">Ustawienia</div>
<div style="position:absolute;left:927px;top:275px;width:21px;height:21px;background:radial-gradient(circle at 20% 15%,#a0c0ff 0%,#4a80f8 35%,#2860f0 70%,#1c50e0 100%);border:1px solid #fff;border-radius:3px;"></div>
<div style="position:absolute;left:950px;top:275px;width:21px;height:21px;background:radial-gradient(circle at 20% 15%,#a0c0ff 0%,#4a80f8 35%,#2860f0 70%,#1c50e0 100%);border:1px solid #fff;border-radius:3px;"></div>
<div style="position:absolute;left:973px;top:275px;width:21px;height:21px;background:radial-gradient(circle at 20% 15%,#f0a080 0%,#e06840 30%,#d84818 70%,#c83000 100%);border:1px solid #fff;border-radius:3px;"></div>
<div style="position:absolute;left:932px;top:289px;width:7px;height:3px;background:#9ab0f0;"></div>
<div style="position:absolute;left:955px;top:280px;width:11px;height:11px;border:1px solid #fff;border-top:3px solid #fff;"></div>
<svg style="position:absolute;left:977px;top:279px" width="13" height="13"><path d="M2 2L11 11M11 2L2 11" stroke="#fff" stroke-width="2.2"/></svg>
<div style="position:absolute;left:284px;top:299px;width:174px;height:406px;background:#fff;border-right:1px solid #7f9db9;border-bottom:1px solid #7f9db9;"></div>
<div style="position:absolute;left:297px;top:309px;width:1px;height:176px;background:repeating-linear-gradient(#a0a0a0 0 1px,transparent 1px 2px);"></div>
<div style="position:absolute;left:298px;top:309px;width:10px;height:1px;background:repeating-linear-gradient(90deg,#a0a0a0 0 1px,transparent 1px 2px);"></div>
<div class="t " style="left:329.6px;top:302.69px;font-size:11px;line-height:13px;color:#000;font-weight:normal;letter-spacing:-0.100px;">Połączenie</div>
<div style="position:absolute;left:298px;top:325px;width:10px;height:1px;background:repeating-linear-gradient(90deg,#a0a0a0 0 1px,transparent 1px 2px);"></div>
<div class="t " style="left:329.6px;top:318.69px;font-size:11px;line-height:13px;color:#000;font-weight:normal;letter-spacing:-0.100px;">Komunikacja AT i PIN</div>
<div style="position:absolute;left:298px;top:341px;width:10px;height:1px;background:repeating-linear-gradient(90deg,#a0a0a0 0 1px,transparent 1px 2px);"></div>
<div class="t " style="left:329.6px;top:334.69px;font-size:11px;line-height:13px;color:#000;font-weight:normal;letter-spacing:-0.100px;">SMS, powiadomienia</div>
<div style="position:absolute;left:298px;top:357px;width:10px;height:1px;background:repeating-linear-gradient(90deg,#a0a0a0 0 1px,transparent 1px 2px);"></div>
<div style="position:absolute;left:327px;top:349px;width:73px;height:16px;background:#316ac5;outline:1px dotted #e0a040;outline-offset:-1px;"></div>
<div class="t " style="left:329.6px;top:350.69px;font-size:11px;line-height:13px;color:#fff;font-weight:normal;letter-spacing:-0.100px;">GPRS/UMTS</div>
<div style="position:absolute;left:298px;top:373px;width:10px;height:1px;background:repeating-linear-gradient(90deg,#a0a0a0 0 1px,transparent 1px 2px);"></div>
<div class="t " style="left:329.6px;top:366.69px;font-size:11px;line-height:13px;color:#000;font-weight:normal;letter-spacing:-0.100px;">Start programu</div>
<div style="position:absolute;left:298px;top:389px;width:10px;height:1px;background:repeating-linear-gradient(90deg,#a0a0a0 0 1px,transparent 1px 2px);"></div>
<div class="t " style="left:329.6px;top:382.69px;font-size:11px;line-height:13px;color:#000;font-weight:normal;letter-spacing:-0.100px;">Ogólne</div>
<div style="position:absolute;left:298px;top:405px;width:10px;height:1px;background:repeating-linear-gradient(90deg,#a0a0a0 0 1px,transparent 1px 2px);"></div>
<div class="t " style="left:329.6px;top:398.69px;font-size:11px;line-height:13px;color:#000;font-weight:normal;letter-spacing:-0.100px;">Okres rozliczeniowy</div>
<div style="position:absolute;left:298px;top:421px;width:10px;height:1px;background:repeating-linear-gradient(90deg,#a0a0a0 0 1px,transparent 1px 2px);"></div>
<div class="t " style="left:329.6px;top:414.69px;font-size:11px;line-height:13px;color:#000;font-weight:normal;letter-spacing:-0.100px;">Mail: powiadamianie</div>
<div style="position:absolute;left:298px;top:437px;width:10px;height:1px;background:repeating-linear-gradient(90deg,#a0a0a0 0 1px,transparent 1px 2px);"></div>
<div class="t " style="left:329.6px;top:430.69px;font-size:11px;line-height:13px;color:#000;font-weight:normal;letter-spacing:-0.100px;">Auto modem i port</div>
<div style="position:absolute;left:298px;top:453px;width:10px;height:1px;background:repeating-linear-gradient(90deg,#a0a0a0 0 1px,transparent 1px 2px);"></div>
<div class="t " style="left:329.6px;top:446.69px;font-size:11px;line-height:13px;color:#000;font-weight:normal;letter-spacing:-0.100px;">Identyfikacja SIM</div>
<div style="position:absolute;left:298px;top:469px;width:10px;height:1px;background:repeating-linear-gradient(90deg,#a0a0a0 0 1px,transparent 1px 2px);"></div>
<div class="t " style="left:329.6px;top:462.69px;font-size:11px;line-height:13px;color:#000;font-weight:normal;letter-spacing:-0.100px;">Dźwięki</div>
<div style="position:absolute;left:298px;top:485px;width:10px;height:1px;background:repeating-linear-gradient(90deg,#a0a0a0 0 1px,transparent 1px 2px);"></div>
<div class="t " style="left:329.6px;top:478.69px;font-size:11px;line-height:13px;color:#000;font-weight:normal;letter-spacing:-0.100px;">Inne</div>
<svg style="position:absolute;left:308px;top:301px" width="16" height="16"><path d="M8 5V10M3 13L8 10L13 13" stroke="#202020" stroke-width="1.2"/><rect x="5.5" y="0.5" width="5" height="5" rx="1" fill="#60b8f8" stroke="#8090c0" stroke-width=".8"/><path d="M5 6.5H11" stroke="#b0b0c8" stroke-width="1.5"/><rect x="0.5" y="8.5" width="5" height="5" rx="1" fill="#60b8f8" stroke="#8090c0" stroke-width=".8"/><path d="M0 14.5H6" stroke="#a0a0d0" stroke-width="1.5"/><rect x="10.5" y="8.5" width="5" height="5" rx="1" fill="#60b8f8" stroke="#8090c0" stroke-width=".8"/><path d="M10 14.5H16" stroke="#a0a0d0" stroke-width="1.5"/><circle cx="8" cy="10.5" r="1.5" fill="#f0b020"/></svg>
<svg style="position:absolute;left:308px;top:317px" width="16" height="16"><path d="M3 13L13 3" stroke="#5a80b8" stroke-width="7" stroke-linecap="round"/><path d="M4 9L7 12M9 4L12 7" stroke="#7aa0d0" stroke-width="2"/><path d="M5 11L11 5" stroke="#40c040" stroke-width="1"/><path d="M1 15L3 13M13 3L15 1" stroke="#5a80b8" stroke-width="2"/></svg>
<svg style="position:absolute;left:308px;top:333px" width="16" height="16"><path d="M2.5 1.5H10L13.5 5V14.5H2.5Z" fill="#fff" stroke="#1048c0" stroke-width="1"/><path d="M10 1.5V5H13.5" fill="#dceafe" stroke="#1048c0"/><path d="M5 6.5H9M5 8.5H12M5 10.5H12M5 12.5H12" stroke="#2a80e0" stroke-width="1"/></svg>
<svg style="position:absolute;left:308px;top:349px" width="16" height="16"><path d="M0.5 11.5V8L2.5 6L4 3.5H11L12.5 6H15L15.5 8.5V11.5Z" fill="#6a98d8" stroke="#3a5a90" stroke-width=".8"/><path d="M5 4.5H7V6.5H4ZM8 4.5H10.5L11.5 6.5H8Z" fill="#3a5a90"/><rect x="2.5" y="10.5" width="3" height="3" fill="#202020"/><rect x="10.5" y="10.5" width="3" height="3" fill="#202020"/></svg>
<svg style="position:absolute;left:308px;top:365px" width="16" height="16"><rect x="1.5" y="0.5" width="13" height="14" fill="#f4f8fc" stroke="#4a7ac0"/><rect x="3" y="2" width="10" height="2" fill="#a0c0e8"/><rect x="3" y="6" width="2" height="6" fill="#3a70c0"/><path d="M6 9H10V7L14 10L10 13V11H6Z" fill="#50b040" stroke="#308020" stroke-width=".6"/></svg>
<svg style="position:absolute;left:308px;top:381px" width="16" height="16"><rect x="1.5" y="0.5" width="13" height="14" fill="#f4f8fc" stroke="#4a7ac0"/><rect x="3" y="2" width="10" height="2" fill="#a0c0e8"/><rect x="3" y="6" width="4" height="7" fill="#3a70c0"/><rect x="8" y="6" width="5" height="7" fill="#70c070" stroke="#40a040" stroke-width=".6"/></svg>
<svg style="position:absolute;left:308px;top:397px" width="16" height="16"><path d="M1 9L9 1L15 7L7 15Z" fill="#6ab86a" stroke="#3a8a3a" stroke-width=".8"/><path d="M3 12L11 4" stroke="#a0e0a0" stroke-width="1"/><circle cx="8" cy="8" r="1.8" fill="none" stroke="#e0f8e0"/></svg>
<svg style="position:absolute;left:308px;top:413px" width="16" height="16"><rect x="0.5" y="2.5" width="15" height="11" fill="#e0ecfc" stroke="#4a70b8"/><path d="M1.5 3.5L8 9L14.5 3.5" stroke="#8aa8d8" fill="none"/></svg>
<svg style="position:absolute;left:308px;top:429px" width="16" height="16"><rect x="1.5" y="1.5" width="13" height="13" fill="#c8e0f8" stroke="#3a4a70"/><path d="M4 12L13 3" stroke="#2a70d0" stroke-width="2.2"/><path d="M3 13L5 10L6 11Z" fill="#f0b020" stroke="#f0b020" stroke-width="1.5"/><path d="M4 13H13" stroke="#707880"/></svg>
<svg style="position:absolute;left:308px;top:445px" width="16" height="16"><rect x="1.5" y="0.5" width="13" height="14" fill="#f4f8fc" stroke="#4a7ac0"/><rect x="3" y="2" width="10" height="2" fill="#a0c0e8"/><rect x="3" y="6" width="4" height="7" fill="#3a70c0"/><rect x="8" y="6" width="5" height="7" fill="#70c070" stroke="#40a040" stroke-width=".6"/></svg>
<svg style="position:absolute;left:308px;top:461px" width="16" height="16"><path d="M2 6H5L10 1V15L5 10H2Z" fill="#3a70d0" stroke="#2a50a0" stroke-width=".6"/><path d="M12 5.5Q13.5 8 12 10.5M13.5 3Q16 8 13.5 13" stroke="#3a70d0" fill="none" stroke-width="1.1"/></svg>
<svg style="position:absolute;left:308px;top:477px" width="16" height="16"><rect x="1.5" y="0.5" width="13" height="14" fill="#f4f8fc" stroke="#4a7ac0"/><rect x="3" y="2" width="10" height="2" fill="#a0c0e8"/><rect x="3" y="8" width="2" height="5" fill="#3a70c0"/><rect x="7" y="6" width="6" height="7" fill="#e4ecf4"/></svg>
<div class="t " style="left:462.3px;top:308.19px;font-size:11px;line-height:13px;color:#000;font-weight:normal;letter-spacing:-0.100px;">Wybierz modem:</div>
<div style="position:absolute;left:462px;top:320px;width:264px;height:22px;background:#fff;border:1px solid #7f9db9;"></div>
<div class="t " style="left:465.8px;top:326.19px;font-size:11px;line-height:13px;color:#000;font-weight:normal;letter-spacing:-0.100px;">Huawei GSM, WCDMA</div>
<div style="position:absolute;left:709px;top:322px;width:15px;height:18px;background:linear-gradient(135deg,#e0e8fc,#b6c8f6);border:1px solid #c0d0f4;border-radius:2px;"></div>
<svg style="position:absolute;left:712px;top:328px" width="10" height="7"><path d="M1 1L5 5L9 1" stroke="#4d6185" stroke-width="2" fill="none"/></svg>
<div class="t " style="left:737.6px;top:318.39px;font-size:11px;line-height:13px;color:#000;font-weight:normal;letter-spacing:-0.164px;">Ostatnia "zastosowana" komenda:</div>
<div class="t " style="left:737.6px;top:332.09px;font-size:11px;line-height:13px;color:#000;font-weight:normal;letter-spacing:-0.132px;">AT^SYSCFG=2,2,2000000000000,1,2</div>
<div style="position:absolute;left:466px;top:358px;width:77px;height:195px;border:1px solid #d0d0bf;border-radius:4px;"></div>
<div class="t" style="left:475.7px;top:352.7px;height:13px;padding:0 2px;background:#ece9d8;font-size:11px;line-height:13px;color:transparent">Technologia</div>
<div class="t " style="left:477.7px;top:353.39px;font-size:11px;line-height:13px;color:#0046d5;font-weight:normal;letter-spacing:-0.100px;">Technologia</div>
<div style="position:absolute;left:545px;top:358px;width:100px;height:195px;border:1px solid #d0d0bf;border-radius:4px;"></div>
<div class="t" style="left:554.3px;top:352.7px;height:13px;padding:0 2px;background:#ece9d8;font-size:11px;line-height:13px;color:transparent">Kolejność</div>
<div class="t " style="left:556.3px;top:353.39px;font-size:11px;line-height:13px;color:#0046d5;font-weight:normal;letter-spacing:-0.100px;">Kolejność</div>
<div style="position:absolute;left:647px;top:358px;width:96px;height:195px;border:1px solid #d0d0bf;border-radius:4px;"></div>
<div class="t" style="left:656.2px;top:352.7px;height:13px;padding:0 2px;background:#ece9d8;font-size:11px;line-height:13px;color:transparent">Pasmo</div>
<div class="t " style="left:658.2px;top:353.39px;font-size:11px;line-height:13px;color:#0046d5;font-weight:normal;letter-spacing:-0.100px;">Pasmo</div>
<div style="position:absolute;left:745px;top:358px;width:74px;height:195px;border:1px solid #d0d0bf;border-radius:4px;"></div>
<div class="t" style="left:754.8px;top:352.7px;height:13px;padding:0 2px;background:#ece9d8;font-size:11px;line-height:13px;color:transparent">Pasmo</div>
<div class="t " style="left:756.8px;top:353.39px;font-size:11px;line-height:13px;color:#0046d5;font-weight:normal;letter-spacing:-0.100px;">Pasmo</div>
<div style="position:absolute;left:822px;top:358px;width:82px;height:195px;border:1px solid #d0d0bf;border-radius:4px;"></div>
<div class="t" style="left:831px;top:352.7px;height:13px;padding:0 2px;background:#ece9d8;font-size:11px;line-height:13px;color:transparent">Roaming</div>
<div class="t " style="left:833px;top:353.39px;font-size:11px;line-height:13px;color:#0046d5;font-weight:normal;letter-spacing:-0.100px;">Roaming</div>
<div style="position:absolute;left:906px;top:358px;width:76px;height:195px;border:1px solid #d0d0bf;border-radius:4px;"></div>
<div class="t" style="left:915.3px;top:352.7px;height:13px;padding:0 2px;background:#ece9d8;font-size:11px;line-height:13px;color:transparent">Komutacja</div>
<div class="t " style="left:917.3px;top:353.39px;font-size:11px;line-height:13px;color:#0046d5;font-weight:normal;letter-spacing:-0.100px;">Komutacja</div>
<div style="position:absolute;left:474px;top:382px;width:13px;height:13px;border-radius:50%;border:1px solid #1c5180;background:radial-gradient(circle at 35% 35%,#dcdcd4,#f8f8f4 70%);"></div>
<div style="position:absolute;left:478px;top:386px;width:5px;height:5px;border-radius:50%;background:radial-gradient(circle at 40% 40%,#7ef07e,#21a121);"></div>
<div class="t " style="left:490px;top:383.19px;font-size:11px;line-height:13px;color:#000;font-weight:normal;letter-spacing:-0.100px;">Automat</div>
<div style="position:absolute;left:474px;top:428px;width:13px;height:13px;border-radius:50%;border:1px solid #1c5180;background:radial-gradient(circle at 35% 35%,#dcdcd4,#f8f8f4 70%);"></div>
<div class="t " style="left:490px;top:429.19px;font-size:11px;line-height:13px;color:#000;font-weight:normal;letter-spacing:-0.100px;">GSM</div>
<div style="position:absolute;left:474px;top:474px;width:13px;height:13px;border-radius:50%;border:1px solid #1c5180;background:radial-gradient(circle at 35% 35%,#dcdcd4,#f8f8f4 70%);"></div>
<div class="t " style="left:490px;top:475.19px;font-size:11px;line-height:13px;color:#000;font-weight:normal;letter-spacing:-0.100px;">WCDMA</div>
<div style="position:absolute;left:474px;top:520px;width:13px;height:13px;border-radius:50%;border:1px solid #1c5180;background:radial-gradient(circle at 35% 35%,#dcdcd4,#f8f8f4 70%);"></div>
<div class="t " style="left:490px;top:521.19px;font-size:11px;line-height:13px;color:#000;font-weight:normal;letter-spacing:-0.100px;">Bez zmian</div>
<div style="position:absolute;left:553px;top:382px;width:13px;height:13px;border-radius:50%;border:1px solid #1c5180;background:radial-gradient(circle at 35% 35%,#dcdcd4,#f8f8f4 70%);"></div>
<div class="t " style="left:569px;top:383.19px;font-size:11px;line-height:13px;color:#000;font-weight:normal;letter-spacing:-0.100px;">Automat</div>
<div style="position:absolute;left:553px;top:428px;width:13px;height:13px;border-radius:50%;border:1px solid #1c5180;background:radial-gradient(circle at 35% 35%,#dcdcd4,#f8f8f4 70%);"></div>
<div class="t " style="left:569px;top:429.19px;font-size:11px;line-height:13px;color:#000;font-weight:normal;letter-spacing:-0.100px;">GSM, WCDMA</div>
<div style="position:absolute;left:553px;top:474px;width:13px;height:13px;border-radius:50%;border:1px solid #1c5180;background:radial-gradient(circle at 35% 35%,#dcdcd4,#f8f8f4 70%);"></div>
<div style="position:absolute;left:557px;top:478px;width:5px;height:5px;border-radius:50%;background:radial-gradient(circle at 40% 40%,#7ef07e,#21a121);"></div>
<div class="t " style="left:569px;top:475.19px;font-size:11px;line-height:13px;color:#000;font-weight:normal;letter-spacing:-0.100px;">WCDMA, GSM</div>
<div style="position:absolute;left:553px;top:520px;width:13px;height:13px;border-radius:50%;border:1px solid #1c5180;background:radial-gradient(circle at 35% 35%,#dcdcd4,#f8f8f4 70%);"></div>
<div class="t " style="left:569px;top:521.19px;font-size:11px;line-height:13px;color:#000;font-weight:normal;letter-spacing:-0.100px;">Bez zmian</div>
<div style="position:absolute;left:655px;top:376px;width:13px;height:13px;border-radius:50%;border:1px solid #1c5180;background:radial-gradient(circle at 35% 35%,#dcdcd4,#f8f8f4 70%);"></div>
<div class="t " style="left:671px;top:377.19px;font-size:11px;line-height:13px;color:#000;font-weight:normal;letter-spacing:-0.100px;">Wszystkie</div>
<div style="position:absolute;left:655px;top:406px;width:13px;height:13px;border-radius:50%;border:1px solid #1c5180;background:radial-gradient(circle at 35% 35%,#dcdcd4,#f8f8f4 70%);"></div>
<div class="t " style="left:671px;top:407.19px;font-size:11px;line-height:13px;color:#000;font-weight:normal;letter-spacing:-0.100px;">Bez zmian</div>
<div style="position:absolute;left:655px;top:436px;width:13px;height:13px;border-radius:50%;border:1px solid #1c5180;background:radial-gradient(circle at 35% 35%,#dcdcd4,#f8f8f4 70%);"></div>
<div style="position:absolute;left:659px;top:440px;width:5px;height:5px;border-radius:50%;background:radial-gradient(circle at 40% 40%,#7ef07e,#21a121);"></div>
<div class="t " style="left:671px;top:437.19px;font-size:11px;line-height:13px;color:#000;font-weight:normal;letter-spacing:-0.100px;">Wybrane</div>
<div style="position:absolute;left:655px;top:466px;width:13px;height:13px;border-radius:50%;border:1px solid #1c5180;background:radial-gradient(circle at 35% 35%,#dcdcd4,#f8f8f4 70%);"></div>
<div class="t " style="left:671px;top:467.19px;font-size:11px;line-height:13px;color:#000;font-weight:normal;letter-spacing:-0.100px;">Wszystkie 16x</div>
<div style="position:absolute;left:655px;top:496px;width:13px;height:13px;border-radius:50%;border:1px solid #1c5180;background:radial-gradient(circle at 35% 35%,#dcdcd4,#f8f8f4 70%);"></div>
<div class="t " style="left:671px;top:497.19px;font-size:11px;line-height:13px;color:#000;font-weight:normal;letter-spacing:-0.100px;">W900 8x</div>
<div style="position:absolute;left:655px;top:526px;width:13px;height:13px;border-radius:50%;border:1px solid #1c5180;background:radial-gradient(circle at 35% 35%,#dcdcd4,#f8f8f4 70%);"></div>
<div class="t " style="left:671px;top:527.19px;font-size:11px;line-height:13px;color:#000;font-weight:normal;letter-spacing:-0.100px;">W1700 8x</div>
<div style="position:absolute;left:830px;top:390px;width:13px;height:13px;border-radius:50%;border:1px solid #1c5180;background:radial-gradient(circle at 35% 35%,#dcdcd4,#f8f8f4 70%);"></div>
<div class="t " style="left:846px;top:391.19px;font-size:11px;line-height:13px;color:#000;font-weight:normal;letter-spacing:-0.100px;">Wyłączony</div>
<div style="position:absolute;left:830px;top:451px;width:13px;height:13px;border-radius:50%;border:1px solid #1c5180;background:radial-gradient(circle at 35% 35%,#dcdcd4,#f8f8f4 70%);"></div>
<div style="position:absolute;left:834px;top:455px;width:5px;height:5px;border-radius:50%;background:radial-gradient(circle at 40% 40%,#7ef07e,#21a121);"></div>
<div class="t " style="left:846px;top:452.19px;font-size:11px;line-height:13px;color:#000;font-weight:normal;letter-spacing:-0.100px;">Włączony</div>
<div style="position:absolute;left:830px;top:512px;width:13px;height:13px;border-radius:50%;border:1px solid #1c5180;background:radial-gradient(circle at 35% 35%,#dcdcd4,#f8f8f4 70%);"></div>
<div class="t " style="left:846px;top:513.19px;font-size:11px;line-height:13px;color:#000;font-weight:normal;letter-spacing:-0.100px;">Bez zmian</div>
<div style="position:absolute;left:914px;top:379px;width:13px;height:13px;border-radius:50%;border:1px solid #1c5180;background:radial-gradient(circle at 35% 35%,#dcdcd4,#f8f8f4 70%);"></div>
<div class="t " style="left:930px;top:380.19px;font-size:11px;line-height:13px;color:#000;font-weight:normal;letter-spacing:-0.100px;">CS</div>
<div style="position:absolute;left:914px;top:415px;width:13px;height:13px;border-radius:50%;border:1px solid #1c5180;background:radial-gradient(circle at 35% 35%,#dcdcd4,#f8f8f4 70%);"></div>
<div class="t " style="left:930px;top:416.19px;font-size:11px;line-height:13px;color:#000;font-weight:normal;letter-spacing:-0.100px;">PS</div>
<div style="position:absolute;left:914px;top:451px;width:13px;height:13px;border-radius:50%;border:1px solid #1c5180;background:radial-gradient(circle at 35% 35%,#dcdcd4,#f8f8f4 70%);"></div>
<div style="position:absolute;left:918px;top:455px;width:5px;height:5px;border-radius:50%;background:radial-gradient(circle at 40% 40%,#7ef07e,#21a121);"></div>
<div class="t " style="left:930px;top:452.19px;font-size:11px;line-height:13px;color:#000;font-weight:normal;letter-spacing:-0.100px;">CS i PS</div>
<div style="position:absolute;left:914px;top:487px;width:13px;height:13px;border-radius:50%;border:1px solid #1c5180;background:radial-gradient(circle at 35% 35%,#dcdcd4,#f8f8f4 70%);"></div>
<div class="t " style="left:930px;top:488.19px;font-size:11px;line-height:13px;color:#000;font-weight:normal;letter-spacing:-0.100px;">Dowolna</div>
<div style="position:absolute;left:914px;top:523px;width:13px;height:13px;border-radius:50%;border:1px solid #1c5180;background:radial-gradient(circle at 35% 35%,#dcdcd4,#f8f8f4 70%);"></div>
<div class="t " style="left:930px;top:524.19px;font-size:11px;line-height:13px;color:#000;font-weight:normal;letter-spacing:-0.100px;">Bez zmian</div>
<div style="position:absolute;left:749px;top:368px;width:13px;height:13px;border:1px solid #1c5180;background:linear-gradient(135deg,#dcdcd7,#fbfbf9);"></div>
<div class="t " style="left:765.4px;top:369.19px;font-size:11px;line-height:13px;color:#008000;font-weight:normal;letter-spacing:-0.100px;">GSM850</div>
<div style="position:absolute;left:749px;top:383px;width:13px;height:13px;border:1px solid #1c5180;background:linear-gradient(135deg,#dcdcd7,#fbfbf9);"></div>
<div class="t " style="left:765.4px;top:384.19px;font-size:11px;line-height:13px;color:#008000;font-weight:normal;letter-spacing:-0.100px;">GSM900</div>
<div style="position:absolute;left:749px;top:398px;width:13px;height:13px;border:1px solid #1c5180;background:linear-gradient(135deg,#dcdcd7,#fbfbf9);"></div>
<div class="t " style="left:765.4px;top:399.19px;font-size:11px;line-height:13px;color:#008000;font-weight:normal;letter-spacing:-0.100px;">GSM1800</div>
<div style="position:absolute;left:749px;top:413px;width:13px;height:13px;border:1px solid #1c5180;background:linear-gradient(135deg,#dcdcd7,#fbfbf9);"></div>
<div class="t " style="left:765.4px;top:414.19px;font-size:11px;line-height:13px;color:#008000;font-weight:normal;letter-spacing:-0.100px;">GSM1900</div>
<div style="position:absolute;left:749px;top:428px;width:13px;height:13px;border:1px solid #1c5180;background:linear-gradient(135deg,#dcdcd7,#fbfbf9);"></div>
<div class="t " style="left:765.4px;top:429.19px;font-size:11px;line-height:13px;color:#800000;font-weight:normal;letter-spacing:-0.100px;">W850</div>
<div style="position:absolute;left:749px;top:443px;width:13px;height:13px;border:1px solid #1c5180;background:linear-gradient(135deg,#dcdcd7,#fbfbf9);"></div>
<svg style="position:absolute;left:751px;top:446px" width="9" height="8"><path d="M1 3.5L3.5 6L8 1" stroke="#21a121" stroke-width="2" fill="none"/></svg>
<div class="t " style="left:765.4px;top:444.19px;font-size:11px;line-height:13px;color:#008000;font-weight:normal;letter-spacing:-0.100px;">W900</div>
<div style="position:absolute;left:749px;top:458px;width:13px;height:13px;border:1px solid #1c5180;background:linear-gradient(135deg,#dcdcd7,#fbfbf9);"></div>
<div class="t " style="left:765.4px;top:459.19px;font-size:11px;line-height:13px;color:#800000;font-weight:normal;letter-spacing:-0.100px;">W1700</div>
<div style="position:absolute;left:749px;top:473px;width:13px;height:13px;border:1px solid #1c5180;background:linear-gradient(135deg,#dcdcd7,#fbfbf9);"></div>
<div class="t " style="left:765.4px;top:474.19px;font-size:11px;line-height:13px;color:#800000;font-weight:normal;letter-spacing:-0.100px;">W1900</div>
<div style="position:absolute;left:749px;top:488px;width:13px;height:13px;border:1px solid #1c5180;background:linear-gradient(135deg,#dcdcd7,#fbfbf9);"></div>
<div class="t " style="left:765.4px;top:489.19px;font-size:11px;line-height:13px;color:#008000;font-weight:normal;letter-spacing:-0.100px;">W2100</div>
<div style="position:absolute;left:749px;top:503px;width:13px;height:13px;border:1px solid #1c5180;background:linear-gradient(135deg,#dcdcd7,#fbfbf9);"></div>
<div class="t " style="left:765.4px;top:504.19px;font-size:11px;line-height:13px;color:#800000;font-weight:normal;letter-spacing:-0.100px;">ExG900</div>
<div style="position:absolute;left:749px;top:518px;width:13px;height:13px;border:1px solid #1c5180;background:linear-gradient(135deg,#dcdcd7,#fbfbf9);"></div>
<div class="t " style="left:765.4px;top:519.19px;font-size:11px;line-height:13px;color:#800000;font-weight:normal;letter-spacing:-0.100px;">PrG900</div>
<div style="position:absolute;left:749px;top:533px;width:13px;height:13px;border:1px solid #1c5180;background:linear-gradient(135deg,#dcdcd7,#fbfbf9);"></div>
<div class="t " style="left:765.4px;top:534.19px;font-size:11px;line-height:13px;color:#800000;font-weight:normal;letter-spacing:-0.100px;">RaG900</div>
<div style="position:absolute;left:504px;top:561px;width:83px;height:17px;border:1px solid #003c74;border-radius:3px;background:linear-gradient(#fefefe 0%,#f4f4f0 60%,#e6e5dd 100%);box-shadow:inset -1px -1px 0 #d8d2bd;"></div>
<div class="t" style="left:504px;top:563.5px;width:83px;text-align:center;font-size:11px;line-height:13px">Zastosuj</div>
<div style="position:absolute;left:606px;top:561px;width:81px;height:17px;border:1px solid #003c74;border-radius:3px;background:linear-gradient(#fefefe 0%,#f4f4f0 60%,#e6e5dd 100%);box-shadow:inset -1px -1px 0 #d8d2bd;"></div>
<div class="t" style="left:606px;top:563.5px;width:81px;text-align:center;font-size:11px;line-height:13px">Informacje</div>
<div style="position:absolute;left:466px;top:600px;width:277px;height:95px;background:#a6caf0;"></div>
<div class="t " style="left:466px;top:600.69px;font-size:11px;line-height:13px;color:#000;font-weight:normal;letter-spacing:-0.170px;">Ustawienia: "Wybrane", "Wszystkie 16x", "W900 8x",</div>
<div class="t " style="left:466px;top:613.69px;font-size:11px;line-height:13px;color:#000;font-weight:normal;letter-spacing:-0.170px;">"W1700 8x" mogą doprowadzić do zawieszenia modemu.</div>
<div class="t " style="left:466px;top:626.69px;font-size:11px;line-height:13px;color:#000;font-weight:normal;letter-spacing:-0.170px;">Jeżeli modem się zawiesi należy go odłączyć i ponownie</div>
<div class="t " style="left:466px;top:639.69px;font-size:11px;line-height:13px;color:#000;font-weight:normal;letter-spacing:-0.170px;">podłączyć, w tym czasie program Top_netinfo powinien</div>
<div class="t " style="left:466px;top:652.69px;font-size:11px;line-height:13px;color:#000;font-weight:normal;letter-spacing:-0.170px;">być wyłączony.</div>
<div class="t " style="left:466px;top:665.69px;font-size:11px;line-height:13px;color:#000;font-weight:normal;letter-spacing:-0.170px;">Ustawienie "Wszystkie 16x" jest specyficzne dla modemu</div>
<div class="t " style="left:466px;top:678.69px;font-size:11px;line-height:13px;color:#000;font-weight:normal;letter-spacing:-0.170px;">Huawei E227.</div>
<div style="position:absolute;left:746px;top:604px;width:236px;height:91px;border:1px solid #d0d0bf;border-radius:4px;"></div>
<div class="t" style="left:754px;top:598px;height:13px;padding:0 2px;background:#ece9d8;font-size:11px;line-height:13px;color:transparent">Wymuszanie kanału UMTS</div>
<div class="t " style="left:756px;top:598.69px;font-size:11px;line-height:13px;color:#0046d5;font-weight:normal;letter-spacing:-0.100px;">Wymuszanie kanału UMTS</div>
<div class="t " style="left:751.3px;top:615.29px;font-size:11px;line-height:13px;color:#800000;font-weight:normal;letter-spacing:-0.161px;">Ustawienia tylko dla zaawansowanych użytk.</div>
<div class="t " style="left:751.3px;top:627.29px;font-size:11px;line-height:13px;color:#800000;font-weight:normal;letter-spacing:-0.100px;">Używanie ich może uszkodzić modem</div>
<div style="position:absolute;left:753px;top:646px;width:106px;height:17px;border:1px solid #003c74;border-radius:3px;background:linear-gradient(#fefefe 0%,#f4f4f0 60%,#e6e5dd 100%);box-shadow:inset -1px -1px 0 #d8d2bd;"></div>
<div class="t" style="left:753px;top:648.5px;width:106px;text-align:center;font-size:11px;line-height:13px">Ustaw kanał</div>
<div style="position:absolute;left:867px;top:646px;width:106px;height:17px;border:1px solid #003c74;border-radius:3px;background:linear-gradient(#fefefe 0%,#f4f4f0 60%,#e6e5dd 100%);box-shadow:inset -1px -1px 0 #d8d2bd;"></div>
<div class="t" style="left:867px;top:648.5px;width:106px;text-align:center;font-size:11px;line-height:13px">Lista kanałów</div>
<div style="position:absolute;left:753px;top:671px;width:106px;height:17px;border:1px solid #003c74;border-radius:3px;background:linear-gradient(#fefefe 0%,#f4f4f0 60%,#e6e5dd 100%);box-shadow:inset -1px -1px 0 #d8d2bd;"></div>
<div class="t" style="left:753px;top:673.5px;width:106px;text-align:center;font-size:11px;line-height:13px">Ustawienia fabryczne</div>
<div style="position:absolute;left:867px;top:671px;width:106px;height:17px;border:1px solid #003c74;border-radius:3px;background:linear-gradient(#fefefe 0%,#f4f4f0 60%,#e6e5dd 100%);box-shadow:inset -1px -1px 0 #d8d2bd;"></div>
<div class="t" style="left:867px;top:673.5px;width:106px;text-align:center;font-size:11px;line-height:13px">Sprawdź status</div>
<div style="position:absolute;left:458px;top:704px;width:538px;height:1px;background:#aca899;"></div>
<div style="position:absolute;left:284px;top:705px;width:712px;height:1px;background:#f6f3e6;"></div>
<div style="position:absolute;left:285px;top:711px;width:711px;height:40px;border:1px solid #d0d0bf;border-radius:4px;"></div>
<div class="t" style="left:294px;top:706px;height:13px;padding:0 2px;background:#ece9d8;font-size:11px;line-height:13px;color:transparent">Top_netinfo</div>
<div class="t " style="left:296px;top:706.69px;font-size:11px;line-height:13px;color:#0046d5;font-weight:normal;letter-spacing:-0.100px;">Top_netinfo</div>
<div style="position:absolute;left:895px;top:720px;width:73px;height:21px;border:1px solid #003c74;border-radius:3px;background:linear-gradient(#fefefe 0%,#f4f4f0 60%,#e6e5dd 100%);box-shadow:inset -1px -1px 0 #d8d2bd;"></div>
<div class="t" style="left:895px;top:724.5px;width:73px;text-align:center;font-size:11px;line-height:13px">Zamknij</div>
</div></body></html>
